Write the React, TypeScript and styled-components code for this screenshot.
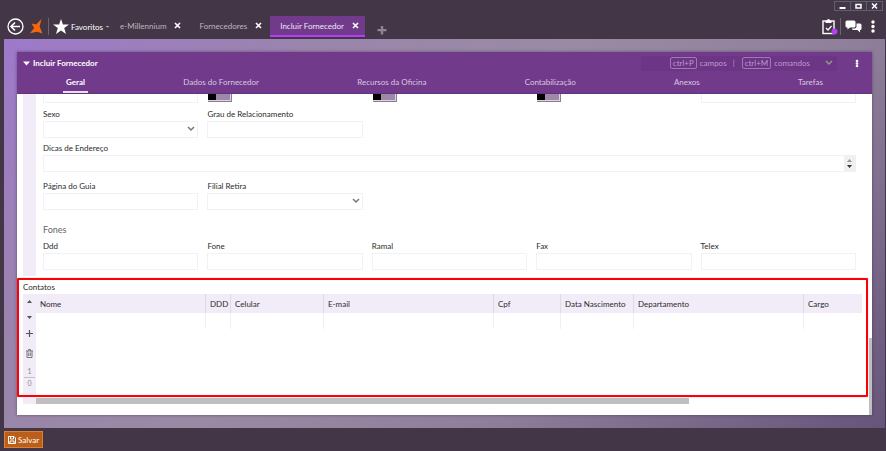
import React from "react";
import styled, { createGlobalStyle } from "styled-components";

const GlobalStyle = createGlobalStyle`
  * { box-sizing: border-box; }
  body { margin: 0; background: #433747; }
  body, button, input, select, textarea {
    font-family: Lato, "Open Sans", sans-serif;
    font-size: 8px;
    line-height: 14px;
    color: #2b2b2b;
  }
  button { border: 0; padding: 0; background: none; cursor: pointer; }
`;

const Page = styled.div`
  display: flex;
  flex-direction: column;
  min-height: 100vh;
  background: #433747;
`;

const WindowBar = styled.div`
  display: flex;
  justify-content: flex-end;
  height: 12px;
  padding: 1px 3px 0 0;
`;

const WindowButton = styled.button`
  display: flex;
  align-items: center;
  justify-content: center;
  width: 17px;
  height: 10px;
  border: 1px solid #5b6173;
  margin-left: -1px;
`;

const Nav = styled.nav`
  display: flex;
  align-items: center;
  height: 27px;
  padding: 4px 11px 2px 7px;
`;

const IconButton = styled.button<{ $gap?: number }>`
  display: flex;
  align-items: center;
  margin-left: ${(p) => p.$gap ?? 0}px;
  color: #fff;
`;

const Divider = styled.span<{ $gap: number }>`
  width: 1px;
  height: 17px;
  margin-left: ${(p) => p.$gap}px;
  background: #6e6572;
`;

const Favorites = styled.button`
  display: flex;
  align-items: center;
  gap: 2px;
  margin-left: 4px;
  color: #fff;
`;

const NavTab = styled.div<{ $active?: boolean }>`
  display: flex;
  align-items: center;
  gap: 8px;
  height: 21px;
  padding: 0 ${(p) => (p.$active ? 6 : 8)}px 0 10px;
  background: ${(p) => (p.$active ? "#713a8b" : "transparent")};
  border-bottom: 2px solid ${(p) => (p.$active ? "#b53df5" : "transparent")};
`;

const NavLink = styled.a<{ $active?: boolean }>`
  color: ${(p) => (p.$active ? "#f0e6f5" : "#bdb6c0")};
  text-decoration: none;
  white-space: nowrap;
`;

const NavEnd = styled.div`
  display: flex;
  align-items: center;
  margin-left: auto;
`;

const Stage = styled.main`
  display: flex;
  flex: 1;
  margin: 0 1px 0 4px;
  padding: 13px 13px;
  background: linear-gradient(135deg, #9e79cb 0%, #9a85ab 25%, #9a8aa4 45%, #8f7f9a 68%, #67547a 100%);
`;

const Panel = styled.section`
  display: flex;
  flex: 1;
  flex-direction: column;
  min-width: 0;
  background: #fff;
  box-shadow: 0 0 3px rgba(60, 40, 80, 0.6);
`;

const PanelHeader = styled.header`
  height: 42px;
  background: #713a8b;
  border-bottom: 1px solid #643080;
`;

const TitleRow = styled.div`
  display: flex;
  align-items: center;
  height: 22px;
  padding: 0 13px 0 6px;
`;

const Title = styled.h1`
  display: flex;
  align-items: center;
  gap: 3px;
  margin: 0;
  font-size: 8px;
  font-weight: 700;
  color: #fff;
`;

const Command = styled.button`
  display: flex;
  align-items: center;
  height: 15px;
  margin: 0 18px 0 auto;
  padding: 0 4px 0 29px;
  background: #6c3586;
  color: #bd9bcc;
`;

const Key = styled.kbd`
  height: 12px;
  padding: 0 2px;
  margin-right: 3px;
  border: 1px solid #a07ab2;
  border-radius: 2px;
  font-family: inherit;
  font-size: 8px;
  line-height: 10px;
`;

const Pipe = styled.span`
  margin: 0 7px 0 6px;
`;

const CommandArrow = styled.span`
  display: flex;
  margin-left: 15px;
`;

const Tabs = styled.div`
  display: flex;
  justify-content: space-around;
`;

const Tab = styled.button<{ $active?: boolean }>`
  height: 19px;
  padding: 0 3px;
  margin: 0 -3px;
  line-height: 17px;
  color: ${(p) => (p.$active ? "#fff" : "#d9c8e2")};
  font-weight: ${(p) => (p.$active ? 700 : 400)};
  border-bottom: 2px solid ${(p) => (p.$active ? "#eadff0" : "transparent")};
`;

const Content = styled.div`
  display: grid;
  grid-template-columns: 1fr 4px;
  flex: 1;
`;

const Form = styled.div`
  min-width: 0;
`;

const ScrollTrack = styled.div`
  display: flex;
  align-items: flex-end;
  padding-left: 1px;
`;

const ScrollThumb = styled.div`
  width: 100%;
  height: 24%;
  background: #bfbfbf;
`;

const Group = styled.div`
  display: grid;
  grid-template-columns: 13px 1fr;
  column-gap: 7px;
  padding: 0 12px 2px 6px;
`;

const Rail = styled.div`
  background: #f2ecf8;
`;

const Fields = styled.div`
  display: grid;
  grid-template-columns: repeat(5, 1fr);
  column-gap: 9px;
  padding-bottom: 6px;
`;

const ClippedCell = styled.div<{ $column: number }>`
  grid-column: ${(p) => p.$column};
  display: flex;
  align-items: flex-end;
  height: 9px;
  overflow: hidden;
`;

const Toggle = styled.input`
  appearance: none;
  width: 24px;
  height: 17px;
  margin: 0 0 1px 1px;
  background: linear-gradient(90deg, #000 8px, #9d8aa8 8px);
  box-shadow: inset -1px -1px 0 #8d7a98, inset -2px -2px 0 #ddd3e3;
`;

const Cell = styled.div<{ $top?: number; $wide?: boolean; $start?: boolean }>`
  display: flex;
  flex-direction: column;
  margin-top: ${(p) => p.$top ?? 0}px;
  ${(p) => (p.$wide ? "grid-column: 1 / -1;" : p.$start ? "grid-column: 1;" : "")}
`;

const Label = styled.label`
  height: 14px;
  white-space: nowrap;
`;

const Input = styled.input`
  width: 100%;
  height: 17px;
  flex: none;
  border: 1px solid #f3f1f8;
  padding: 0 3px;
  background: #fff;
`;

const SelectBox = styled.div`
  position: relative;
  display: flex;
`;

const Select = styled.select`
  appearance: none;
  width: 100%;
  height: 17px;
  border: 1px solid #f3f1f8;
  border-radius: 0;
  background: #fff;
`;

const SelectArrow = styled.span`
  position: absolute;
  right: 3px;
  top: 5px;
  display: flex;
  pointer-events: none;
`;

const MemoBox = styled.div`
  display: grid;
  grid-template-columns: 1fr 12px;
  height: 17px;
`;

const Memo = styled.textarea`
  height: 17px;
  border: 1px solid #f3f1f8;
  border-right: 0;
  padding: 0 3px;
  resize: none;
  overflow: hidden;
`;

const Stepper = styled.div`
  display: flex;
  flex-direction: column;
  align-items: center;
  justify-content: center;
  gap: 3px;
  background: #f0f0f0;

  button { display: flex; }
`;

const GroupTitle = styled.h2`
  grid-column: 1 / -1;
  margin: 13px 0 2px;
  height: 14px;
  font-size: 9px;
  font-weight: 400;
  color: #666;
`;

const Contacts = styled.section`
  height: 119px;
  padding: 0 4px;
  border: 2px solid #fb0007;
  border-radius: 1px;
  box-shadow: 0 0 1px #ff5050;
`;

const ContactsTitle = styled.h2`
  margin: 0;
  height: 14px;
  font-size: 8px;
  font-weight: 400;
`;

const ContactsBody = styled.div`
  display: grid;
  grid-template-columns: 13px 1fr;
  height: 101px;
`;

const Tools = styled.div`
  display: flex;
  flex-direction: column;
  align-items: center;
  background: #f2ecf8;
`;

const Tool = styled.button<{ $height: number }>`
  display: flex;
  align-items: center;
  justify-content: center;
  width: 13px;
  height: ${(p) => p.$height}px;
`;

const Count = styled.span<{ $line?: boolean }>`
  width: 11px;
  height: 12px;
  line-height: 11px;
  font-size: 7px;
  text-align: center;
  color: #888;
  border-bottom: ${(p) => (p.$line ? "1px solid #c5bfcb" : "0")};
`;

const Table = styled.table`
  width: 100%;
  table-layout: fixed;
  border-collapse: separate;
  border-spacing: 0;
  align-self: start;
`;

const Th = styled.th<{ $width?: number }>`
  width: ${(p) => (p.$width ? `${p.$width}px` : "auto")};
  height: 19px;
  padding: 1px 4px 0;
  background: #f2ecf8;
  font-weight: 400;
  text-align: left;
  white-space: nowrap;
  border-right: ${(p) => (p.$width ? "1px solid #dfd9e5" : "0")};
`;

const Td = styled.td`
  height: 16px;
  padding: 0;
  border-right: 1px solid #f1eff6;
  &:last-child { border-right: 0; }
`;

const HorizontalScroll = styled.div`
  display: grid;
  grid-template-columns: 13px 1fr;
  height: 7px;
  margin: 0 6px;
`;

const HorizontalThumb = styled.div`
  width: 79%;
  height: 6px;
  margin-top: 1px;
  background: #bfbfbf;
`;

const Footer = styled.footer`
  height: 23px;
  padding: 3px 4px;
`;

const Save = styled.button`
  display: flex;
  align-items: center;
  gap: 2px;
  height: 17px;
  padding: 0 3px;
  border: 1px solid #dc8038;
  background: #bb5e1a;
  color: #fff;
`;

const Cross = () => (
  <svg width="7" height="7" viewBox="0 0 7 7" stroke="#fff" strokeWidth="1.6">
    <path d="M1 1l5 5M6 1L1 6" />
  </svg>
);

const Chevron = ({ color }: { color: string }) => (
  <svg width="8" height="6" viewBox="0 0 8 6" fill="none" stroke={color} strokeWidth="1.5">
    <path d="M1 1l3 3 3-3" />
  </svg>
);

const Triangle = ({ up, color }: { up?: boolean; color: string }) => (
  <svg width="5" height="3" viewBox="0 0 5 3" fill={color}>
    <path d={up ? "M0 3h5L2.500 0z" : "M0 0h5L2.500 3z"} />
  </svg>
);

const Kebab = ({ height }: { height: number }) => (
  <svg width="4" height={height} viewBox={`0 0 4 ${height}`} fill="#fff">
    {[2, height / 2, height - 2].map((y) => (
      <circle key={y} cx="2" cy={y} r={height > 10 ? 1.7 : 1.3} />
    ))}
  </svg>
);

const TextField = ({ label, id, ...rest }: { label: string; id: string; $top?: number; $start?: boolean }) => (
  <Cell {...rest}>
    <Label htmlFor={id}>{label}</Label>
    <Input id={id} type="text" />
  </Cell>
);

const SelectField = ({ label, id, ...rest }: { label: string; id: string; $top?: number; $start?: boolean }) => (
  <Cell {...rest}>
    <Label htmlFor={id}>{label}</Label>
    <SelectBox>
      <Select id={id} defaultValue="">
        <option value="" />
      </Select>
      <SelectArrow>
        <Chevron color="#777" />
      </SelectArrow>
    </SelectBox>
  </Cell>
);

const navTabs = ["e-Millennium", "Fornecedores", "Incluir Fornecedor"];
const tabs = ["Geral", "Dados do Fornecedor", "Recursos da Oficina", "Contabilização", "Anexos", "Tarefas"];
const phones = ["Ddd", "Fone", "Ramal", "Fax", "Telex"];
const columns: { name: string; width?: number }[] = [
  { name: "Nome", width: 170 },
  { name: "DDD", width: 25 },
  { name: "Celular", width: 93 },
  { name: "E-mail", width: 170 },
  { name: "Cpf", width: 67 },
  { name: "Data Nascimento", width: 73 },
  { name: "Departamento", width: 170 },
  { name: "Cargo" },
];

export default function App() {
  return (
    <Page>
      <GlobalStyle />
      <WindowBar>
        <WindowButton aria-label="Minimizar">
          <svg width="7" height="6" viewBox="0 0 7 6"><path d="M0.500 4h6v2h-6z" fill="#fff" /></svg>
        </WindowButton>
        <WindowButton aria-label="Maximizar">
          <svg width="7" height="6" viewBox="0 0 7 6"><path d="M1 1.500h5v3.500H1z" fill="none" stroke="#fff" strokeWidth="1.500" /></svg>
        </WindowButton>
        <WindowButton aria-label="Fechar">
          <svg width="7" height="6" viewBox="0 0 7 6"><path d="M1 0.500l5 5M6 0.500l-5 5" stroke="#fff" strokeWidth="1.500" /></svg>
        </WindowButton>
      </WindowBar>
      <Nav>
        <IconButton aria-label="Voltar">
          <svg width="17" height="17" viewBox="0 0 17 17" fill="none" stroke="#fff" strokeWidth="1.300">
            <circle cx="8.500" cy="8.500" r="7.500" />
            <path d="M13 8.500H4.500M8 4.500l-4 4 4 4" strokeWidth="1.600" />
          </svg>
        </IconButton>
        <IconButton $gap={6} aria-label="Início">
          <svg width="13" height="15" viewBox="0 0 13 15" fill="#f8670c">
            <path d="M11.500 0L9.600 7.600L12.500 14.500L7 12.800L0 14.200L4.200 9L1.500 4.600L6.200 5.400Z" />
          </svg>
        </IconButton>
        <Divider $gap={5} />
        <Favorites>
          <svg width="16" height="15" viewBox="0 0 16 15" fill="#fff">
            <path d="M8 0l1.900 5.500H16l-4.800 3.500L13 15l-5-3.600L3 15l1.800-6L0 5.500h6.100z" />
          </svg>
          Favoritos
          <svg width="5" height="3" viewBox="0 0 5 3"><path d="M0.500 1h4l-2 1.500z" fill="#b9b2bd" /></svg>
        </Favorites>
        {navTabs.map((name, i) => (
          <NavTab key={name} $active={i === 2}>
            <NavLink href="#" $active={i === 2}>{name}</NavLink>
            <IconButton aria-label={`Fechar ${name}`}><Cross /></IconButton>
          </NavTab>
        ))}
        <IconButton $gap={12} aria-label="Nova aba">
          <svg width="10" height="16" viewBox="0 0 10 16" fill="#8d8590">
            <path d="M3.800 7h2.400v3H9.500v2.200H6.200v3.300H3.800v-3.300H0.500V10h3.300z" />
          </svg>
        </IconButton>
        <NavEnd>
          <IconButton aria-label="Pendências">
            <svg width="16" height="17" viewBox="0 0 16 17" fill="none">
              <rect x="1" y="3" width="11" height="12.500" stroke="#fff" strokeWidth="1.400" />
              <path d="M3.500 5V2.500H5a1.500 1.500 0 013 0h1.500V5z" fill="#fff" />
              <path d="M4 10l2 2 3.500-4" stroke="#fff" strokeWidth="1.200" />
              <circle cx="12.500" cy="13.500" r="3" fill="#b53df5" />
            </svg>
          </IconButton>
          <Divider $gap={2} />
          <IconButton $gap={4} aria-label="Mensagens">
            <svg width="17" height="13" viewBox="0 0 17 13" fill="#fff">
              <path d="M2 0.500h7q1.500 0 1.500 1.500v4q0 1.500-1.500 1.500H5L2.500 9.500V7.500H2Q0.500 7.500 0.500 6V2Q0.500 0.500 2 0.500z" />
              <path d="M11.500 3.500H15q1.500 0 1.500 1.500v3.500q0 1.500-1.500 1.500v2.500L12.500 10H8.500Q7 10 7 8.500h2.500q2 0 2-2z" />
            </svg>
          </IconButton>
          <IconButton $gap={9} aria-label="Mais opções"><Kebab height={13} /></IconButton>
        </NavEnd>
      </Nav>
      <Stage>
        <Panel>
          <PanelHeader>
            <TitleRow>
              <Title>
                <svg width="7" height="5" viewBox="0 0 7 5" fill="#fff"><path d="M0 0.500h7L3.500 4.500z" /></svg>
                Incluir Fornecedor
              </Title>
              <Command>
                <Key>ctrl+P</Key>campos<Pipe>|</Pipe>
                <Key>ctrl+M</Key>comandos
                <CommandArrow><Chevron color="#8f9b86" /></CommandArrow>
              </Command>
              <IconButton aria-label="Opções"><Kebab height={9} /></IconButton>
            </TitleRow>
            <Tabs role="tablist">
              {tabs.map((name, i) => (
                <Tab key={name} role="tab" aria-selected={i === 0} $active={i === 0}>{name}</Tab>
              ))}
            </Tabs>
          </PanelHeader>
          <Content>
            <Form>
              <Group>
                <Rail />
                <Fields>
                  <ClippedCell $column={1}><Input type="text" aria-label="Documento" /></ClippedCell>
                  {[2, 3, 4].map((column) => (
                    <ClippedCell key={column} $column={column}>
                      <Toggle type="checkbox" aria-label={`Opção ${column - 1}`} />
                    </ClippedCell>
                  ))}
                  <ClippedCell $column={5}><Input type="text" aria-label="Complemento" /></ClippedCell>

                  <SelectField id="sexo" label="Sexo" $top={4} $start />
                  <TextField id="grau" label="Grau de Relacionamento" $top={4} />
                  <Cell $top={3} $wide>
                    <Label htmlFor="dicas">Dicas de Endereço</Label>
                    <MemoBox>
                      <Memo id="dicas" />
                      <Stepper>
                        <button aria-label="Rolar para cima"><Triangle up color="#999" /></button>
                        <button aria-label="Rolar para baixo"><Triangle color="#333" /></button>
                      </Stepper>
                    </MemoBox>
                  </Cell>
                  <TextField id="pagina" label="Página do Guia" $top={7} $start />
                  <SelectField id="filial" label="Filial Retira" $top={7} />
                  <GroupTitle>Fones</GroupTitle>
                  {phones.map((name) => (
                    <TextField key={name} id={name} label={name} />
                  ))}
                </Fields>
              </Group>
              <Contacts>
                <ContactsTitle>Contatos</ContactsTitle>
                <ContactsBody>
                  <Tools>
                    <Tool $height={15} aria-label="Anterior"><Triangle up color="#555" /></Tool>
                    <Tool $height={17} aria-label="Próximo"><Triangle color="#555" /></Tool>
                    <Tool $height={15} aria-label="Adicionar">
                      <svg width="7" height="7" viewBox="0 0 7 7" stroke="#555" strokeWidth="1.200"><path d="M3.500 0v7M0 3.500h7" /></svg>
                    </Tool>
                    <Tool $height={25} aria-label="Excluir">
                      <svg width="7" height="9" viewBox="0 0 7 9" fill="none" stroke="#777" strokeWidth="1">
                        <path d="M0 2h7M2.500 2V0.500h2V2M1 2v6.500h5V2M2.700 3.500v3.500M4.300 3.500v3.500" />
                      </svg>
                    </Tool>
                    <Count $line>1</Count>
                    <Count>0</Count>
                  </Tools>
                  <Table>
                    <thead>
                      <tr>{columns.map((c) => <Th key={c.name} $width={c.width}>{c.name}</Th>)}</tr>
                    </thead>
                    <tbody>
                      <tr>{columns.map((c) => <Td key={c.name} />)}</tr>
                    </tbody>
                  </Table>
                </ContactsBody>
              </Contacts>
              <HorizontalScroll>
                <Rail />
                <HorizontalThumb />
              </HorizontalScroll>
            </Form>
            <ScrollTrack><ScrollThumb /></ScrollTrack>
          </Content>
        </Panel>
      </Stage>
      <Footer>
        <Save>
          <svg width="8" height="8" viewBox="0 0 8 8" fill="none" stroke="#fff" strokeWidth="1">
            <path d="M0.500 0.500h5.500l1.500 1.500v5.500h-7zM2.500 0.500v2.500h3V0.500M2 7.500V5h4v2.500" />
          </svg>
          Salvar
        </Save>
      </Footer>
    </Page>
  );
}
